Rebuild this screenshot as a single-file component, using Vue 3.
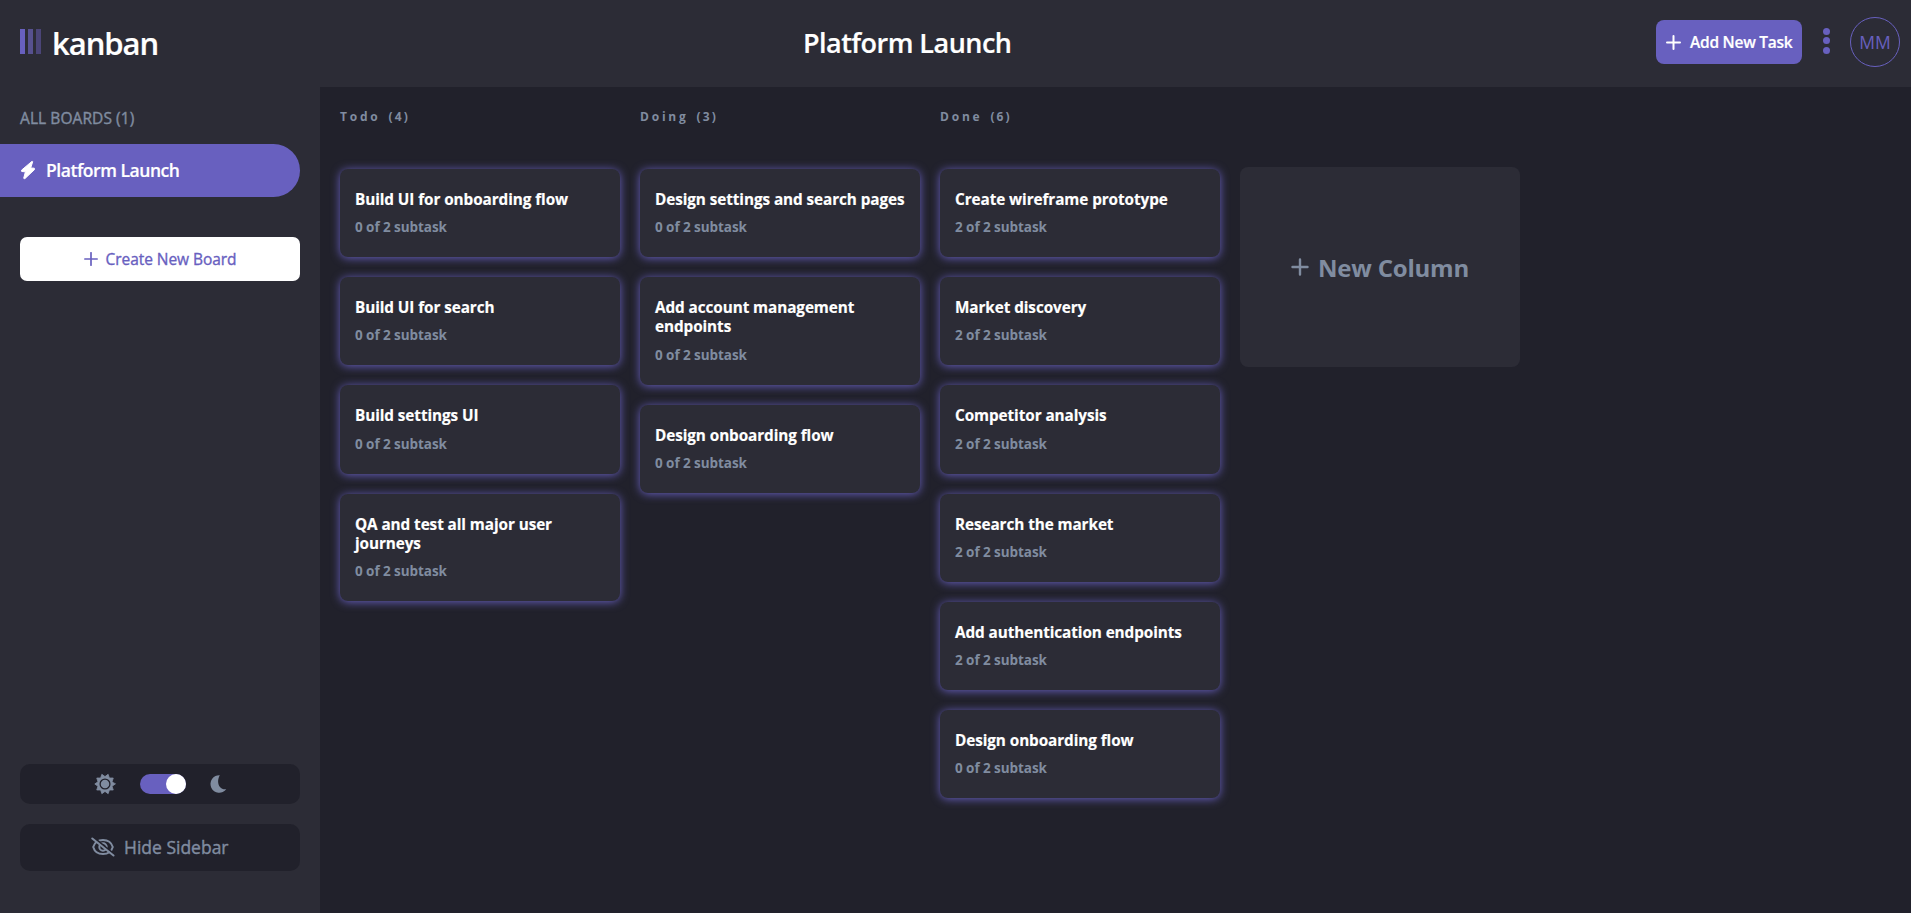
<script setup>
const columns = [
  { name: 'Todo', tasks: [['Build UI for onboarding flow', 0], ['Build UI for search', 0], ['Build settings UI', 0], ['QA and test all major user journeys', 0]] },
  { name: 'Doing', tasks: [['Design settings and search pages', 0], ['Add account management endpoints', 0], ['Design onboarding flow', 0]] },
  { name: 'Done', tasks: [['Create wireframe prototype', 2], ['Market discovery', 2], ['Competitor analysis', 2], ['Research the market', 2], ['Add authentication endpoints', 2], ['Design onboarding flow', 0]] },
]
// Ten-pointed sun outline with its leftmost ray horizontal
const sunPoints = Array.from({ length: 20 }, (_, i) => {
  const r = i % 2 ? 7.4 : 10.2
  const a = (i * Math.PI) / 10
  return `${(11 + r * Math.cos(a)).toFixed(2)},${(11 + r * Math.sin(a)).toFixed(2)}`
}).join(' ')
</script>

<template>
  <div class="app">
    <header class="header">
      <div class="brand">
        <div class="bars"><i></i><i></i><i></i></div>
        <span class="name">kanban</span>
      </div>
      <h1 class="title">Platform Launch</h1>
      <div class="actions">
        <button class="add">
          <svg width="15" height="15" viewBox="0 0 15 15"><path d="M7.500 1v13M1 7.500h13" /></svg>
          <span>Add New Task</span>
        </button>
        <div class="dots"><i></i><i></i><i></i></div>
        <div class="avatar"><span>MM</span></div>
      </div>
    </header>
    <div class="body">
      <aside class="sidebar">
        <p class="all">ALL BOARDS (1)</p>
        <a class="board">
          <svg width="16" height="20" viewBox="0 0 16 20"><path d="M11.800 1.500 1.500 10.200 1.700 11.500 5.400 11.800 3.700 18.300 4.800 18.700 14.500 9.600 14.300 8.200 10.700 8 12.600 2Z" /></svg>
          <span>Platform Launch</span>
        </a>
        <button class="create">
          <svg width="14" height="14" viewBox="0 0 14 14"><path d="M7 .8v12.400M.8 7h12.400" /></svg>
          <span>Create New Board</span>
        </button>
        <div class="theme">
          <svg class="sun" width="22" height="22" viewBox="0 0 22 22"><polygon :points="sunPoints" /><circle cx="11" cy="11" r="4.900" /></svg>
          <span class="switch"><i></i></span>
          <svg class="moon" width="18" height="20" viewBox="0 0 18 20"><path d="M9.800 1.200A8.800 8.800 0 1 0 16.300 15.300C9.200 16.200 5.800 8.500 9.800 1.200Z" /></svg>
        </div>
        <button class="hide">
          <svg width="24" height="20" viewBox="0 0 24 20">
            <path d="M2.200 10C3.600 5.300 7.500 2.900 12 2.900S20.400 5.300 21.800 10C20.400 14.700 16.500 17.100 12 17.100S3.600 14.700 2.200 10Z" />
            <circle cx="12" cy="10" r="3.700" />
            <path class="gap" d="M2.500 .5 23 17" />
            <path d="M1.300 1.500 22.500 18.500" />
          </svg>
          <span>Hide Sidebar</span>
        </button>
      </aside>
      <main class="main">
        <section v-for="c in columns" :key="c.name" class="column">
          <h2>{{ c.name }} <span>({{ c.tasks.length }})</span></h2>
          <article v-for="t in c.tasks" :key="t[0]" class="card">
            <h3>{{ t[0] }}</h3>
            <p>{{ t[1] }} of 2 subtask</p>
          </article>
        </section>
        <button class="new-column">
          <svg width="18" height="18" viewBox="0 0 18 18"><path d="M9 1.500v15M1.500 9h15" /></svg>
          <span>New Column</span>
        </button>
      </main>
    </div>
  </div>
</template>

<style>
body { margin: 0; background: #21212b; }
</style>

<style scoped>
.app { height: 913px; display: flex; flex-direction: column; background: #21212b; color: #fff; font-family: "Open Sans", "Noto Sans", sans-serif; overflow: hidden; }
h1, h2, h3, p { margin: 0; }
button { border: 0; padding: 0; font: inherit; color: inherit; display: flex; align-items: center; }
svg { flex: none; fill: none; stroke: currentColor; stroke-width: 2; stroke-linecap: round; stroke-linejoin: round; }
span { white-space: nowrap; }
.header { height: 87px; flex: none; background: #2c2c36; display: grid; grid-template-columns: 803px 1fr auto; }
.brand { display: flex; align-items: flex-start; padding-left: 20px; }
.bars { display: flex; gap: 3px; padding-top: 29px; }
.bars i { width: 5px; height: 25px; background: #6860bf; }
.bars i:nth-child(2) { background: #57518f; }
.bars i:nth-child(3) { background: #4b4578; }
.name { font-size: 31px; font-weight: 600; line-height: 40px; letter-spacing: -1.050px; -webkit-text-stroke: 0.200px; margin: 23px 0 0 11px; }
.title { font-size: 27px; font-weight: 600; line-height: 40px; letter-spacing: -0.530px; -webkit-text-stroke: 0.200px; margin-top: 23px; white-space: nowrap; }
.actions { display: flex; align-items: flex-start; padding-right: 11px; }
.add { width: 146px; height: 44px; margin-top: 20px; background: #6860bf; border-radius: 8px; font-size: 15.500px; font-weight: 600; letter-spacing: -0.250px; -webkit-text-stroke: 0.200px; padding-left: 9.500px; box-sizing: border-box; gap: 9.500px; }
.dots { display: grid; gap: 2.300px; margin: 28px 0 0 21px; }
.dots i { width: 7px; height: 7px; border-radius: 50%; background: #6860bf; }
.avatar { width: 50px; height: 50px; box-sizing: border-box; border: 1px solid #6860bf; border-radius: 50%; margin: 17px 0 0 20px; color: #6860bf; font-size: 17.500px; display: grid; place-items: center; }
.body { flex: 1; display: flex; }
.sidebar { width: 320px; background: #2c2c36; flex: none; display: flex; flex-direction: column; align-items: flex-start; }
.all { color: #808ca0; font-size: 15.500px; -webkit-text-stroke: 0.400px; line-height: 20px; letter-spacing: 0.080px; margin: 21px 0 0 20px; }
.board { width: 300px; height: 53px; margin-top: 16px; background: #6860bf; border-radius: 0 27px 27px 0; display: flex; align-items: center; padding: 0 0 1px 20px; box-sizing: border-box; gap: 10px; font-size: 17.500px; font-weight: 600; letter-spacing: -0.450px; -webkit-text-stroke: 0.200px; }
.board svg { fill: #fff; stroke-width: 1; }
.create { width: 280px; height: 44px; margin: 40px 0 0 20px; border-radius: 7px; background: #fff; color: #6860bf; font-size: 15.500px; -webkit-text-stroke: 0.350px; letter-spacing: -0.060px; justify-content: center; gap: 8px; }
.create svg { stroke-width: 1.700; }
.theme { margin: auto 0 0 20px; width: 280px; height: 40px; padding-left: 2px; box-sizing: border-box; background: #21212b; border-radius: 10px; color: #808ca0; display: flex; align-items: center; justify-content: center; gap: 24px; }
.sun polygon { fill: #808ca0; stroke-width: 0.800; }
.moon path { fill: #808ca0; stroke: none; }
.sun circle { fill: #808ca0; stroke: #21212b; stroke-width: 1.300; }
.switch { width: 46px; height: 20px; border-radius: 10px; background: #6860bf; display: flex; justify-content: flex-end; }
.switch i { width: 20px; height: 20px; border-radius: 50%; background: #fff; }
.hide { width: 280px; height: 47px; margin: 20px 0 42px 20px; padding-bottom: 1px; box-sizing: border-box; background: #21212b; border-radius: 10px; color: #808ca0; font-size: 17.500px; -webkit-text-stroke: 0.400px; justify-content: center; gap: 8.500px; }
.hide svg { stroke-width: 2; }
.hide .gap { stroke: #21212b; }
.main { flex: 1; display: flex; align-items: flex-start; gap: 20px; padding-left: 20px; }
.column { width: 280px; display: flex; flex-direction: column; gap: 20px; }
.column h2 { color: #808ca0; font-size: 12px; font-weight: 700; letter-spacing: 2.800px; line-height: 16px; margin: 22px 0 24px; }
.column h2 span { margin-left: 2px; letter-spacing: 2.100px; }
.card { box-sizing: border-box; min-height: 88.200px; padding: 21.100px 15px 20.900px; background: #2c2c36; border-radius: 8px; box-shadow: 0 1px 10px #6860bf; }
.card h3 { font-size: 15.300px; font-weight: 700; line-height: 19.200px; letter-spacing: -0.080px; -webkit-text-stroke: 0.150px; }
.card p { color: #808ca0; font-size: 13.500px; font-weight: 700; line-height: 17px; letter-spacing: -0.060px; margin-top: 10px; }
.new-column { width: 280px; height: 200px; margin-top: 80px; background: #2c2c36; border-radius: 8px; color: #808ca0; font-size: 24px; font-weight: 700; letter-spacing: -0.200px; justify-content: center; gap: 9px; }
.new-column svg { stroke-width: 2.400; }
</style>
